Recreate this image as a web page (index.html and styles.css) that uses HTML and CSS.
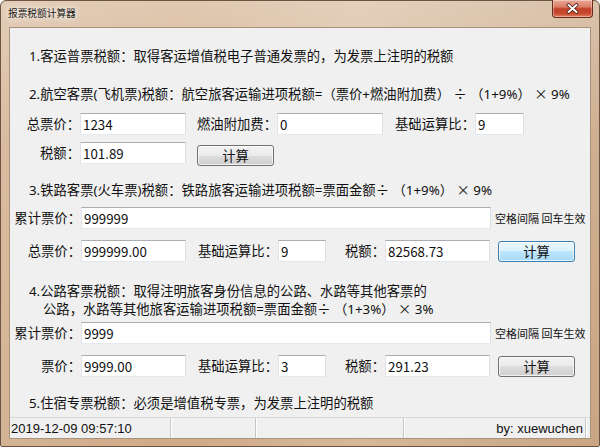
FILE: index.html
```html
<!DOCTYPE html>
<html lang="zh-CN">
<head>
  <meta charset="UTF-8">
  <title>报票税额计算器</title>
  <link rel="stylesheet" href="styles.css">
</head>
<body>
  <div class="window">
    <div class="titlebar">
      <span class="title">报票税额计算器</span>
      <div class="close">
        <svg width="13" height="11" viewBox="0 0 13 11">
          <path d="M2.5 2 L10.5 9 M10.5 2 L2.5 9" stroke="#4a1a10" stroke-width="3.6" stroke-linecap="round" fill="none"/>
          <path d="M2.5 2 L10.5 9 M10.5 2 L2.5 9" stroke="#ffffff" stroke-width="2" stroke-linecap="round" fill="none"/>
        </svg>
      </div>
    </div>

    <div class="client">
      <p class="desc line1">1.客运普票税额：取得客运增值税电子普通发票的，为发票上注明的税额</p>
      <p class="desc line2">2.航空客票(飞机票)税额：航空旅客运输进项税额=（票价+燃油附加费） <span class="fw">÷</span> （1+9%） <span class="fw">×</span> 9%</p>

      <div class="row row-a">
        <span class="lbl" style="width:70px">总票价：</span>
        <input class="txt" style="width:106px" value="1234">
        <span class="lbl" style="width:91px">燃油附加费：</span>
        <input class="txt" style="width:106px" value="0">
        <span class="lbl" style="width:92px">基础运算比：</span>
        <input class="txt" style="width:49px" value="9">
      </div>
      <div class="row row-b">
        <span class="lbl" style="width:70px">税额：</span>
        <input class="txt" style="width:106px" value="101.89">
        <button class="btn btn-air">计算</button>
      </div>

      <p class="desc line3">3.铁路客票(火车票)税额：铁路旅客运输进项税额=票面金额<span class="fw">÷</span> （1+9%） <span class="fw">×</span> 9%</p>

      <div class="row row-c">
        <span class="lbl" style="width:71px">累计票价：</span>
        <input class="txt" style="width:410px" value="999999">
        <span class="hint">空格间隔 回车生效</span>
      </div>
      <div class="row row-d">
        <span class="lbl" style="width:71px">总票价：</span>
        <input class="txt" style="width:105px" value="999999.00">
        <span class="lbl" style="width:92px">基础运算比：</span>
        <input class="txt" style="width:48px" value="9">
        <span class="lbl" style="width:59px">税额：</span>
        <input class="txt" style="width:105px" value="82568.73">
        <button class="btn btn-row focused">计算</button>
      </div>

      <p class="desc line4">
        <span>4.公路客票税额：取得注明旅客身份信息的公路、水路等其他客票的</span>
        <span class="indent">公路，水路等其他旅客运输进项税额=票面金额<span class="fw">÷</span> （1+3%） <span class="fw">×</span> 3%</span>
      </p>

      <div class="row row-e">
        <span class="lbl" style="width:71px">累计票价：</span>
        <input class="txt" style="width:410px" value="9999">
        <span class="hint">空格间隔 回车生效</span>
      </div>
      <div class="row row-f">
        <span class="lbl" style="width:71px">票价：</span>
        <input class="txt" style="width:105px" value="9999.00">
        <span class="lbl" style="width:92px">基础运算比：</span>
        <input class="txt" style="width:48px" value="3">
        <span class="lbl" style="width:59px">税额：</span>
        <input class="txt" style="width:105px" value="291.23">
        <button class="btn btn-row">计算</button>
      </div>

      <p class="desc line5">5.住宿专票税额：必须是增值税专票，为发票上注明的税额</p>

      <div class="statusbar">
        <div class="panel p1">2019-12-09 09:57:10</div>
        <div class="panel p2"></div>
        <div class="panel p3"></div>
        <div class="panel p4">by: xuewuchen</div>
      </div>
    </div>
  </div>
</body>
</html>
```

FILE: styles.css
```css
body {
  margin: 0;
  background: #ffffff;
  font-family: "Noto Sans CJK SC", "Liberation Sans", sans-serif;
}

.window {
  width: 600px;
  height: 447px;
  box-sizing: border-box;
  padding: 0 8px 7px 8px;
  display: flex;
  flex-direction: column;
  border: 1px solid #6b5542;
  border-radius: 6px 6px 2px 2px;
  background:
    linear-gradient(to right, rgba(255,255,255,0.1), rgba(255,255,255,0) 30%, rgba(255,255,255,0.15) 60%, rgba(0,0,0,0.03)),
    linear-gradient(to bottom, #e0c8b0, #d6b596 30%, #cfab88);
}

.titlebar {
  height: 26px;
  display: flex;
  align-items: flex-start;
  flex-shrink: 0;
}

.title {
  margin-top: 6px;
  margin-left: -1px;
  font-size: 9.7px;
  line-height: 13px;
  color: #1a1a1a;
  text-shadow: 0 0 6px rgba(255,255,255,0.9), 0 0 10px rgba(255,255,255,0.7);
}

.close {
  margin-left: auto;
  margin-right: -2px;
  margin-top: -1px;
  width: 41px;
  height: 18px;
  box-sizing: border-box;
  border: 1px solid #6a2a1c;
  border-top: none;
  border-radius: 0 0 4px 4px;
  background: linear-gradient(to bottom, #e9a896 0%, #dc7d66 40%, #c2412a 52%, #c84a2f 80%, #e08463 100%);
  box-shadow: inset 0 0 0 1px rgba(255,255,255,0.35);
  display: flex;
  justify-content: center;
  align-items: center;
}

.client {
  flex: 1;
  box-sizing: border-box;
  border: 1px solid #a8927c;
  background: #f0f0f0;
  display: flex;
  flex-direction: column;
  color: #111111;
  font-size: 13.33px;
}

.desc {
  margin: 0;
  padding-left: 19px;
  line-height: 20px;
  white-space: nowrap;
  font-family: "Noto Sans", "Noto Sans CJK SC", sans-serif;
}

.fw {
  font-family: "Noto Sans CJK SC", sans-serif;
}

.line1 { margin-top: 18px; }
.line2 { margin-top: 18px; }
.line3 { margin-top: 14px; }
.line4 { margin-top: 20px; line-height: 18px; }
.line5 { margin-top: 16px; }

.line4 > span {
  display: block;
}

.line4 .indent {
  padding-left: 14px;
}

.row {
  display: flex;
  align-items: flex-start;
  height: 22px;
}

.row-a { margin-top: 9px; }
.row-b { margin-top: 7px; height: 24px; }
.row-c { margin-top: 7px; }
.row-d { margin-top: 11px; }
.row-e { margin-top: 4px; }
.row-f { margin-top: 11px; }

.lbl {
  display: flex;
  justify-content: flex-end;
  white-space: nowrap;
  line-height: 22px;
  height: 22px;
}

.txt {
  height: 22px;
  box-sizing: border-box;
  margin: 0;
  padding: 0 2px;
  border: 1px solid;
  border-color: #abadb3 #dbdfe6 #e3e9ef #e2e3ea;
  background: #ffffff;
  font-family: "Noto Sans CJK SC", "Liberation Sans", sans-serif;
  font-size: 13.33px;
  color: #111111;
  outline: none;
}

.hint {
  margin-left: 4px;
  font-size: 11px;
  line-height: 22px;
  white-space: nowrap;
}

.btn {
  width: 77px;
  height: 21px;
  box-sizing: border-box;
  padding: 0;
  border: 1px solid #707070;
  border-radius: 3px;
  background: linear-gradient(to bottom, #f2f2f2 0%, #ebebeb 50%, #dddddd 50%, #cfcfcf 100%);
  box-shadow: inset 0 0 0 1px rgba(255,255,255,0.7);
  font-family: "Noto Sans CJK SC", sans-serif;
  font-size: 13.33px;
  line-height: 19px;
  color: #111111;
}

.btn-air {
  margin-left: 11px;
  margin-top: 3px;
}

.btn-row {
  margin-left: 8px;
  margin-top: 1px;
}

.btn.focused {
  border-color: #3c7fb1;
  background: linear-gradient(to bottom, #eaf6fd 0%, #d9f0fc 50%, #bee6fd 50%, #a7d9f5 100%);
}

.statusbar {
  margin-top: auto;
  height: 21px;
  display: flex;
  border-top: 1px solid #d9d9d9;
  box-sizing: border-box;
  font-family: "Liberation Sans", sans-serif;
  font-size: 13px;
  line-height: 21px;
  color: #111111;
}

.panel {
  box-sizing: border-box;
  border-right: 1px solid #c8c8c8;
  box-shadow: 1px 0 0 #ffffff;
  white-space: nowrap;
}

.p1 { width: 161px; padding-left: 1px; }
.p2 { width: 85px; }
.p3 { width: 148px; }
.p4 { width: 182px; text-align: right; padding-right: 2px; }
```
